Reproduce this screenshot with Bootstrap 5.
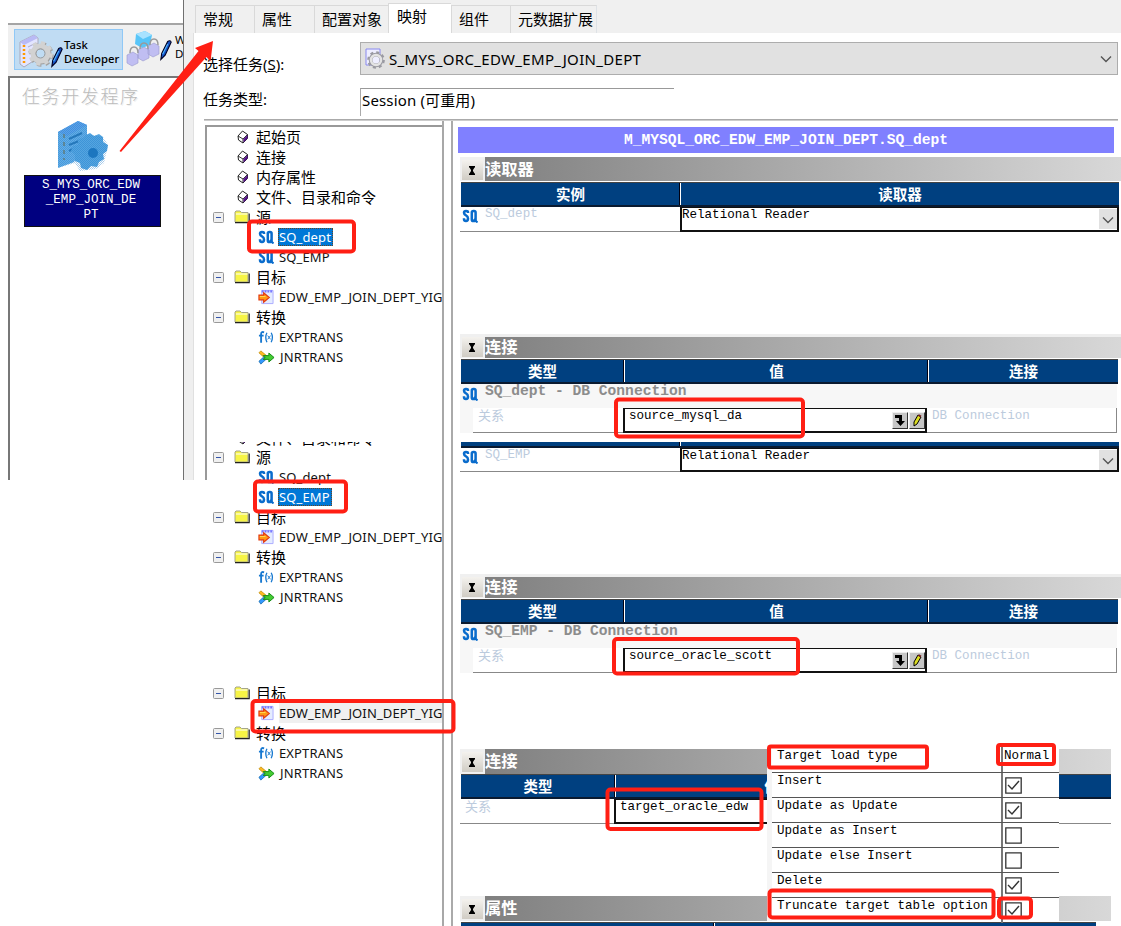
<!DOCTYPE html>
<html lang="zh-CN">
<head>
<meta charset="utf-8">
<title>Task Developer</title>
<link href="https://cdn.jsdelivr.net/npm/bootstrap@5.3.0/dist/css/bootstrap.min.css" rel="stylesheet">
<script src="https://cdn.jsdelivr.net/npm/bootstrap@5.3.0/dist/js/bootstrap.bundle.min.js"></script>
<style>
body{width:1121px;height:926px;background:#fff;color:#000;font:15px/20px "Noto Sans","Noto Sans CJK SC",sans-serif}
svg{display:block;flex:none}
.mono{font-family:"Liberation Mono","Noto Sans CJK SC",monospace;font-size:12.55px;line-height:15px;white-space:pre}
.dev{width:183px;height:480px;padding:23px 0 0 8px}
.toolbar{height:53px;background:#f0f0f0;border-top:2px solid #a5a5a5}
.tool{height:41px;width:109px;margin:4px 0 0 6px;border:1px solid #90c8f6;background:#c0dcf3;font-size:11.3px;line-height:14px;font-weight:500;padding:2px 0 0 2px}
.tool2{margin:2px 0 0 3px;font-size:11.5px;line-height:14px}
.canvas{height:404px;border-left:2px solid #777;border-top:2px solid #777}
.emboss{font-size:18px;line-height:24px;letter-spacing:1.6px;color:#bbb;text-shadow:-1px 0 #fff,1px 1px #eee;margin:6px 0 0 12px;font-weight:300}
.node{width:137px;height:52px;margin:1px 0 0 14px;background:#000080;border:1px solid #111;color:#fff;text-align:center}
.node .mono{padding-top:2px;margin-left:-3px}
.win{height:926px;width:938px}
.strip{height:33px;background:#f0f0f0;padding-left:11px;border-left:1px solid #707070}
.tabx{height:28px;border:1px solid #d9d9d9;border-bottom:0;border-right:0;background:#f0f0f0;padding:3px 0 0 7px}
.tabx.on{height:30px;background:#fff;padding:2px 0 0 8px}
.edge{width:11px;height:447px;background:#efefef;border-left:1px solid #707070;border-right:1px solid #e0e0e0}
.combo{width:758px;height:33px;background:#e1e1e1;border:1px solid #adadad;padding:0 5px 0 4px;font-size:15px;letter-spacing:.32px}
.stat{width:314px;height:28px;border-left:1px solid #aaa;border-top:1px solid #999;padding:1px 0 0 1px;letter-spacing:.15px}
.rule{height:2px;width:914px;margin:3px 0 0 10px;background:linear-gradient(#999,#ddd)}
.tree{width:239px;height:805px;border-right:2px solid #a8a8a8;overflow:hidden;padding-top:4px}
.t1{height:317px;border-left:2px solid #999;border-top:2px solid #999}
.second{height:166px;overflow:hidden;background:linear-gradient(#999,#999) 0 0/2px 38px no-repeat;padding-left:2px}
.third{margin-top:75px;padding-left:2px}
.r{height:20px;white-space:nowrap;padding-left:30px}
.r.f{padding-left:6px}
.r.c{padding-left:51px;font-size:13px;color:#111}
.r.c .tx{letter-spacing:.13px;line-height:20px}
.r.c svg{margin-right:5px}
.r .bk{margin-right:7px}.r .mi{margin-right:10px}.r .fo{margin-right:6px}
.tx.sel{background:#0078d7;color:#fff;outline:1px dotted #642;outline-offset:-1px;height:18px;line-height:18px!important;margin-left:-1px;padding:0 2px 0 1px}
.detail{width:670px;margin-left:7px;height:805px;border-left:2px solid #aaa;padding-left:5px}
.banner{width:656px;height:26px;margin:6px 0 4px;padding-top:6px;background:#8080ff;color:#fff;text-align:center;font-weight:700}
.banner .mono,.grp .mono{font-size:14.6px;font-weight:700}
.sec{margin-left:2px}
.bar{height:24px;background:#f0f0f0}
.bar b{font-size:16.3px;color:#fff;line-height:24px;background:linear-gradient(90deg,#808080,#d8d8d8);flex:1;height:100%}
.bar b.lip{border-top:3px solid #eee;line-height:20px}
.bar.tall{height:25px}
.bar i{width:21px;height:20px;margin:3px 2px 0;background:linear-gradient(#f4f2ee,#d0ccc4);align-self:flex-start}
.bar i svg{margin:6px 0 0 6px}
.hd{height:25px;border-top:1px solid #444;border-bottom:2px solid #0a1a30;background:#004080;color:#fff;font-weight:700;font-size:14.5px;line-height:22px;text-align:center;margin-left:1px}
.hd div+div{border-left:1px solid #fff;box-shadow:-1px 0 #001}
.ln{height:25px;border-bottom:1px solid #888}
.ln svg{margin:2px 0 0 2px}
.pale{color:#bccbdd}
.val{border:2px solid #111;border-top:1px solid #111;height:25px;background:#fff}
.grp{height:24px;background:#f7f7f7;color:#8c8c8c}
.grp svg{margin:3px 0 0 2px}
.grp .mono{line-height:14px}
.kin{width:150px;font-size:13px;line-height:15px;padding-left:5px}
.dd{width:18px;height:20px;background:#e1e1e1;margin-top:1px}
.dd svg{margin:7px 3px}
.ib{width:16px;height:17px;background:#c6c6c6;border:1px solid #eee;border-right-color:#333;border-bottom-color:#333;margin:3px 1px 0 0}
.w219{width:219px}.w163{width:163px}.w304{width:304px}.w190{width:190px}
.opts{left:767px;top:745px;width:292px;height:176px;background:#fff;border-left:5px solid #f5f5f5}
.opts>div{height:25px;border-bottom:1px solid #555;padding-left:5px}
.opts>div:first-child{height:27.5px}
.opts>div:first-child>.mono{padding-top:4px}
.opts>div>.mono{width:224px;padding-top:1px}
.opts .v{border-left:2px solid #777;height:100%;flex:1;padding:3px 0 0 1px}
.opts .v svg{margin:1px 0 0 1px}
.over{left:0;top:0;z-index:5}
</style>
</head>
<body class="position-relative overflow-hidden d-flex align-items-start">
<svg width="0" height="0" class="position-absolute">
<defs>
<pattern id="dots" width="2" height="2" patternUnits="userSpaceOnUse"><path fill="#1876c8" opacity=".75" d="M0 0h1v1H0zM1 1h1v1H1z"/></pattern>
<symbol id="book" viewBox="0 0 12 14"><path d="M1 6 5.500 1 10.500 4.500V8.500L6 13 1.500 10z" fill="#fff" stroke="#222" stroke-width="1"/><path d="m1 6 5 3 4.500-4.500M6 9v4" fill="none" stroke="#222" stroke-width=".9"/><path d="m6.500 9 4-4v3.500l-4 4z" fill="#518"/></symbol>
<symbol id="minus" viewBox="0 0 11 11"><rect x=".5" y=".5" width="10" height="10" rx="1" fill="#f0f0f0" stroke="#999"/><path d="M3 5.500h5" stroke="#35a"/></symbol>
<symbol id="folder" viewBox="0 0 16 14"><path d="M1 12V2l1-1h4l1.500 1.500H14V12z" fill="#f7f445" stroke="#a5a58a"/><path d="M1 12.700h14.200V3.500" fill="none" stroke="#222" stroke-width="1.200"/><path d="M2 4h11.500" stroke="#fff"/></symbol>
<symbol id="sq" viewBox="0 0 16 14"><g fill="none" stroke="#0a6ccc" stroke-width="2.500"><path d="M6 4V3.200Q6 2 4 2T2 3.800Q2 5.500 4 6.400T6 9.500Q6 12 4 12T2 10V9.300"/><rect x="9.800" y="2" width="3.800" height="10" rx="1.600"/><path d="m11.800 10 3.700 3.500" stroke-width="2"/></g></symbol>
<symbol id="tgt" viewBox="0 0 17 16"><path d="M4 1h12v14H4z" fill="#e4ecff" stroke="#aaf"/><path d="M4 2h12" stroke="#77f" stroke-width="2.500" stroke-dasharray="2 1"/><path d="M1 6h5V3.500l6 5-6 5V11H1z" fill="#ff9a14" stroke="#e33a10" stroke-width="1.200"/><path d="M2 7.500h6" stroke="#fd5"/></symbol>
<symbol id="fx" viewBox="0 0 17 14"><g fill="none" stroke="#1778d0" stroke-width="2"><path d="M6.500 2Q3.300 1 3.300 4v9M1 5.500h5"/><path d="M9.500 2.500Q7 7 9.500 12.500M14 2.500q2.600 4.500 0 10" stroke-width="1.400"/><path d="m10.300 5.500 3 4m0-4-3 4" stroke-width="1"/></g></symbol>
<symbol id="jn" viewBox="0 0 18 15"><path d="m1 2.500 2-2 6 5-2.500 2z" fill="#fb2" stroke="#b80" stroke-width=".8"/><path d="m1 11.500 5-4.500 3 2-6 5.500z" fill="#39f" stroke="#16a" stroke-width=".8"/><path d="M5.500 5.500h6V2.800l5.500 4.700-5.500 4.700V9.500h-6l2-2z" fill="#4c3" stroke="#181"/></symbol>
<symbol id="hour" viewBox="0 0 8 9"><path d="M1 0h6v1.500H6.500L5 4v1l1.500 2.500H7V9H1V7.500h.5L3 5V4L1.500 1.500H1z" fill="#000"/></symbol>
<symbol id="chev" viewBox="0 0 12 8"><path d="m1 1.500 5 5 5-5" fill="none" stroke="#555" stroke-width="1.400"/></symbol>
<symbol id="gear" viewBox="0 0 24 24"><circle cx="12" cy="12" r="7.200" fill="none" stroke="currentColor" stroke-width="5"/><circle cx="12" cy="12" r="10.300" fill="none" stroke="currentColor" stroke-width="3" stroke-dasharray="4.100 3.990"/></symbol>
<symbol id="pen" viewBox="0 0 14 24"><path d="M9 2q3-2 4 1L6 18l-5 5 1-7z" fill="#1553c8" stroke="#002" stroke-width="1.300"/><path d="m9 5-6 12" stroke="#5bf" stroke-width="1.200"/></symbol>
<symbol id="down" viewBox="0 0 14 14"><path d="M2 2h7v6h3l-4.500 5L3 8h3V5H2z" fill="#000"/></symbol>
<symbol id="pencil" viewBox="0 0 14 14"><path d="m4 9 4-7 3 2-4 7-3 2z" fill="#dd2" stroke="#000"/><path d="m8.500 2 2.500 1.500" stroke="#722" stroke-width="2"/></symbol>
<symbol id="on" viewBox="0 0 17 17"><path d="M.8.800h15.400v15.400H.800z" fill="#fff" stroke="#333" stroke-width="1.300"/><path d="m3 8 4 4 7-8" fill="none" stroke="#333" stroke-width="1.400"/></symbol>
<symbol id="off" viewBox="0 0 17 17"><path d="M.8.800h15.400v15.400H.800z" fill="#fff" stroke="#333" stroke-width="1.300"/></symbol>
</defs>
</svg>

<aside class="dev flex-shrink-0">
  <div class="toolbar d-flex overflow-hidden">
    <div class="tool d-flex flex-shrink-0">
      <svg width="47" height="38" viewBox="0 0 47 38"><path d="M3 10 17 3l4 3v20L7 35l-4-3z" fill="#e3e5ff" stroke="#aab"/><path d="m3 10 14-7 4 3L7 13z" fill="#b9baf5"/><path d="M7 13v18" stroke="#f90" stroke-width="2.500" stroke-dasharray="2 2"/><path d="m11 15 8-4m-8 9 8-4" stroke="#aac"/><g color="#a2a2a2"><use href="#gear" x="12" y="10" width="25" height="25"/></g><g color="#d2d2d2"><use href="#gear" x="11" y="9" width="25" height="25"/></g><circle cx="23.500" cy="21.500" r="4.500" fill="#c0dcf3" stroke="#999"/><use href="#pen" x="34" y="14" width="12" height="22"/></svg>
      <div style="margin-top:6px">Task<br>Developer</div>
    </div>
    <div class="tool2 d-flex flex-shrink-0">
      <svg width="47" height="41" viewBox="0 0 47 41"><path d="m10 7 9-3 7 4-2 10-8 3-7-4z" fill="#58c5f8"/><path d="m10 7 9-3 7 4-9 4z" fill="#a8e2ff"/><g fill="#c0beF2" stroke="#99c" stroke-width=".600"><path d="m1 28 6-3 5 3v8l-6 3-5-3zM12 23l6-3 5 3v8l-6 3-5-3zM22 19l6-3 5 3v8l-6 3-5-3z"/></g><g fill="none" stroke="#999" stroke-width="1.500"><path d="M4 26q0-6 4-6t4 6M14 22q0-6 4-6t4 6M24 18q0-6 4-6t4 6"/></g><use href="#pen" x="34" y="12" width="12" height="22"/></svg>
      <div style="margin:6px 0 0 2px">Workflow<br>Designer</div>
    </div>
  </div>
  <div class="canvas">
    <div class="emboss">任务开发程序</div>
    <svg width="54" height="54" viewBox="0 0 54 54" style="margin:12px 0 0 46px"><path d="M2 12 22 1l9 4v12L18 42 2 48z" fill="#64aee6"/><path d="m2 12 20-11 9 4-20 11z" fill="#5ba0e8"/><path d="m13 19 13-6M13 25l10-4M13 31l6-3" stroke="#2878b8" stroke-width="2"/><path d="M8 14v26" stroke="#6b8a8c" stroke-width="2" stroke-dasharray="4 4"/><path d="m30 15 4-2 4 3 5-2 4 3v5l5 3-1 6-4 3 1 5-5 3-2 5-6-1-4 4-6-2-1-5-5-2v-6l-4-4 2-5 5-1v-6l5-1z" fill="#55a5e0"/><circle cx="37" cy="33" r="5" fill="#1d76bd"/><path d="M2 12 22 1l9 4v9l16 3 5 8-4 18-8 6-16 2-5-8-17 5z" fill="url(#dots)" opacity=".5"/></svg>
    <div class="node"><div class="mono">S_MYS_ORC_EDW
_EMP_JOIN_DE
PT</div></div>
  </div>
</aside>

<main class="win flex-shrink-0">
  <div class="strip d-flex align-items-end">
    <div class="tabx" style="width:59px">常规</div><div class="tabx" style="width:60px">属性</div><div class="tabx" style="width:74px">配置对象</div><div class="tabx on" style="width:63px">映射</div><div class="tabx" style="width:59px">组件</div><div class="tabx border-end" style="width:87px">元数据扩展</div>
  </div>
  <div class="d-flex">
    <div class="edge flex-shrink-0"></div>
    <div class="flex-grow-1">
      <div class="d-flex" style="height:55px;padding:9px 0 0 9px">
        <div style="width:157px;padding-top:12px">选择任务(<u>S</u>):</div>
        <div class="combo d-flex align-items-center"><svg width="20" height="22" viewBox="0 0 20 22" style="margin-right:4px"><path d="M1 1h14v16H1z" fill="#eef" stroke="#88e"/><g color="#9a9aa2"><use href="#gear" x="2" y="3" width="18" height="18"/></g><circle cx="11" cy="12" r="5" fill="none" stroke="#e4e4e4" stroke-width="2.500"/></svg><span class="flex-grow-1">S_MYS_ORC_EDW_EMP_JOIN_DEPT</span><svg width="12" height="8"><use href="#chev"/></svg></div>
      </div>
      <div class="d-flex" style="height:28px;padding-left:9px"><div style="width:157px;padding-top:1px">任务类型:</div><div class="stat">Session (可重用)</div></div>
      <div class="rule"></div>
      <div class="d-flex" style="padding-left:11px">
        <div class="tree flex-shrink-0">
          <div class="t1">
            <div class="r d-flex align-items-center"><svg class="bk" width="12" height="14"><use href="#book"/></svg><span>起始页</span></div>
            <div class="r d-flex align-items-center"><svg class="bk" width="12" height="14"><use href="#book"/></svg><span>连接</span></div>
            <div class="r d-flex align-items-center"><svg class="bk" width="12" height="14"><use href="#book"/></svg><span>内存属性</span></div>
            <div class="r d-flex align-items-center"><svg class="bk" width="12" height="14"><use href="#book"/></svg><span>文件、目录和命令</span></div>
            <div class="r f d-flex align-items-center"><svg class="mi" width="11" height="11"><use href="#minus"/></svg><svg class="fo" width="16" height="14"><use href="#folder"/></svg><span>源</span></div>
            <div class="r c d-flex align-items-center"><svg width="16" height="14"><use href="#sq"/></svg><span class="tx sel">SQ_dept</span></div>
            <div class="r c d-flex align-items-center"><svg width="16" height="14"><use href="#sq"/></svg><span class="tx">SQ_EMP</span></div>
            <div class="r f d-flex align-items-center"><svg class="mi" width="11" height="11"><use href="#minus"/></svg><svg class="fo" width="16" height="14"><use href="#folder"/></svg><span>目标</span></div>
            <div class="r c d-flex align-items-center"><svg width="16" height="16"><use href="#tgt"/></svg><span class="tx">EDW_EMP_JOIN_DEPT_YIG</span></div>
            <div class="r f d-flex align-items-center"><svg class="mi" width="11" height="11"><use href="#minus"/></svg><svg class="fo" width="16" height="14"><use href="#folder"/></svg><span>转换</span></div>
            <div class="r c d-flex align-items-center"><svg width="16" height="14"><use href="#fx"/></svg><span class="tx">EXPTRANS</span></div>
            <div class="r c d-flex align-items-center"><svg width="17" height="15"><use href="#jn"/></svg><span class="tx">JNRTRANS</span></div>
          </div>
          <div class="second">
            <div style="height:5px" class="overflow-hidden"><div class="r d-flex align-items-center" style="margin-top:-14px"><svg class="bk" width="12" height="14"><use href="#book"/></svg><span>文件、目录和命令</span></div></div>
            <div class="r f d-flex align-items-center"><svg class="mi" width="11" height="11"><use href="#minus"/></svg><svg class="fo" width="16" height="14"><use href="#folder"/></svg><span>源</span></div>
            <div class="r c d-flex align-items-center"><svg width="16" height="14"><use href="#sq"/></svg><span class="tx">SQ_dept</span></div>
            <div class="r c d-flex align-items-center"><svg width="16" height="14"><use href="#sq"/></svg><span class="tx sel">SQ_EMP</span></div>
            <div class="r f d-flex align-items-center"><svg class="mi" width="11" height="11"><use href="#minus"/></svg><svg class="fo" width="16" height="14"><use href="#folder"/></svg><span>目标</span></div>
            <div class="r c d-flex align-items-center"><svg width="16" height="16"><use href="#tgt"/></svg><span class="tx">EDW_EMP_JOIN_DEPT_YIG</span></div>
            <div class="r f d-flex align-items-center"><svg class="mi" width="11" height="11"><use href="#minus"/></svg><svg class="fo" width="16" height="14"><use href="#folder"/></svg><span>转换</span></div>
            <div class="r c d-flex align-items-center"><svg width="16" height="14"><use href="#fx"/></svg><span class="tx">EXPTRANS</span></div>
            <div class="r c d-flex align-items-center"><svg width="17" height="15"><use href="#jn"/></svg><span class="tx">JNRTRANS</span></div>
          </div>
          <div class="third">
            <div class="r f d-flex align-items-center"><svg class="mi" width="11" height="11"><use href="#minus"/></svg><svg class="fo" width="16" height="14"><use href="#folder"/></svg><span>目标</span></div>
            <div class="r c d-flex align-items-center"><svg width="16" height="16"><use href="#tgt"/></svg><span class="tx" style="background:#f0f0f0">EDW_EMP_JOIN_DEPT_YIG</span></div>
            <div class="r f d-flex align-items-center"><svg class="mi" width="11" height="11"><use href="#minus"/></svg><svg class="fo" width="16" height="14"><use href="#folder"/></svg><span>转换</span></div>
            <div class="r c d-flex align-items-center"><svg width="16" height="14"><use href="#fx"/></svg><span class="tx">EXPTRANS</span></div>
            <div class="r c d-flex align-items-center"><svg width="17" height="15"><use href="#jn"/></svg><span class="tx">JNRTRANS</span></div>
          </div>
        </div>

        <div class="detail flex-shrink-0">
          <div class="banner"><div class="mono">M_MYSQL_ORC_EDW_EMP_JOIN_DEPT.SQ_dept</div></div>
          <section class="sec" style="height:177px">
            <div class="bar d-flex"><i><svg width="8" height="9"><use href="#hour"/></svg></i><b>读取器</b></div>
            <div class="hd d-flex" style="margin-top:1px;width:658px"><div class="w219">实例</div><div class="flex-grow-1">读取器</div></div>
            <div class="d-flex" style="width:659px"><div class="ln d-flex" style="width:220px"><svg width="16" height="14"><use href="#sq"/></svg><span class="mono pale" style="margin-left:7px">SQ_dept</span></div><div class="val d-flex flex-grow-1"><span class="mono flex-grow-1">Relational Reader</span><span class="dd"><svg width="12" height="8"><use href="#chev"/></svg></span></div></div>
          </section>
          <section class="sec" style="height:108px">
            <div class="bar d-flex"><i><svg width="8" height="9"><use href="#hour"/></svg></i><b class="lip">连接</b></div>
            <div class="hd d-flex" style="margin-top:1px;width:657px"><div class="w163">类型</div><div class="w304">值</div><div class="w190">连接</div></div>
            <div class="grp d-flex" style="width:657px"><svg width="16" height="14"><use href="#sq"/></svg><span class="mono" style="margin-left:7px">SQ_dept - DB Connection</span></div>
            <div class="d-flex" style="width:657px"><div class="grp" style="width:13px;height:25px"></div><div class="ln pale kin">关系</div><div class="val d-flex" style="width:304px"><span class="mono flex-grow-1" style="padding-left:4px">source_mysql_da</span><span class="ib"><svg width="14" height="14"><use href="#down"/></svg></span><span class="ib me-0"><svg width="14" height="14"><use href="#pencil"/></svg></span></div><div class="ln mono pale flex-grow-1" style="padding:1px 0 0 5px;border-right:1px solid #888">DB Connection</div></div>
          </section>
          <section class="sec" style="height:132px">
            <div class="hd d-flex" style="height:6px;border-top:0;width:658px"><div class="w219"></div><div class="flex-grow-1"></div></div>
            <div class="d-flex" style="width:659px"><div class="ln d-flex" style="width:220px;height:24px"><svg width="16" height="14"><use href="#sq"/></svg><span class="mono pale" style="margin-left:7px">SQ_EMP</span></div><div class="val d-flex flex-grow-1" style="height:24px"><span class="mono flex-grow-1">Relational Reader</span><span class="dd"><svg width="12" height="8"><use href="#chev"/></svg></span></div></div>
          </section>
          <section class="sec" style="height:175px">
            <div class="bar d-flex"><i><svg width="8" height="9"><use href="#hour"/></svg></i><b class="lip">连接</b></div>
            <div class="hd d-flex" style="margin-top:1px;width:657px"><div class="w163">类型</div><div class="w304">值</div><div class="w190">连接</div></div>
            <div class="grp d-flex" style="width:657px"><svg width="16" height="14"><use href="#sq"/></svg><span class="mono" style="margin-left:7px">SQ_EMP - DB Connection</span></div>
            <div class="d-flex" style="width:657px"><div class="grp" style="width:13px;height:25px"></div><div class="ln pale kin">关系</div><div class="val d-flex" style="width:304px"><span class="mono flex-grow-1" style="padding-left:4px">source_oracle_scott</span><span class="ib"><svg width="14" height="14"><use href="#down"/></svg></span><span class="ib me-0"><svg width="14" height="14"><use href="#pencil"/></svg></span></div><div class="ln mono pale flex-grow-1" style="padding:1px 0 0 5px;border-right:1px solid #888">DB Connection</div></div>
          </section>
          <section class="sec" style="height:147px;width:651px">
            <div class="bar tall d-flex"><i><svg width="8" height="9"><use href="#hour"/></svg></i><b>连接</b></div>
            <div class="hd d-flex"><div style="width:154px">类型</div><div style="width:312px">值</div><div class="flex-grow-1"></div></div>
            <div class="d-flex"><div class="ln pale kin" style="width:154px">关系</div><div class="val mono" style="width:312px;padding-left:4px">target_oracle_edw</div><div class="ln flex-grow-1"></div></div>
          </section>
          <section class="sec" style="width:651px">
            <div class="bar tall d-flex"><i><svg width="8" height="9"><use href="#hour"/></svg></i><b>属性</b></div>
            <div class="hd d-flex" style="height:5px;border-bottom:0;width:635px;margin-top:1px"><div style="width:253px"></div><div class="flex-grow-1"></div></div>
          </section>
        </div>
      </div>
    </div>
  </div>
</main>

<div class="opts position-absolute">
  <div class="d-flex"><span class="mono">Target load type</span><span class="v mono">Normal</span></div>
  <div class="d-flex"><span class="mono">Insert</span><span class="v"><svg width="17" height="17"><use href="#on"/></svg></span></div>
  <div class="d-flex"><span class="mono">Update as Update</span><span class="v"><svg width="17" height="17"><use href="#on"/></svg></span></div>
  <div class="d-flex"><span class="mono">Update as Insert</span><span class="v"><svg width="17" height="17"><use href="#off"/></svg></span></div>
  <div class="d-flex"><span class="mono">Update else Insert</span><span class="v"><svg width="17" height="17"><use href="#off"/></svg></span></div>
  <div class="d-flex"><span class="mono">Delete</span><span class="v"><svg width="17" height="17"><use href="#on"/></svg></span></div>
  <div class="d-flex border-bottom-0"><span class="mono">Truncate target table option</span><span class="v"><svg width="17" height="17"><use href="#on"/></svg></span></div>
</div>

<svg class="over position-absolute" width="1121" height="926" fill="none" stroke="#ff1f14" stroke-width="4">
  <path d="M119.500 151 198.500 51 195 48l18-7-2.500 20.500-4-4.500L121 152z" fill="#ff1f14" stroke="none"/>
  <rect x="249" y="221.500" width="105" height="30" rx="3"/>
  <rect x="255" y="481.500" width="91" height="30" rx="3"/>
  <rect x="252.500" y="701" width="201" height="30.500" rx="3"/>
  <rect x="616" y="399.500" width="187" height="37" rx="3"/>
  <rect x="614" y="639" width="184" height="34.500" rx="3"/>
  <rect x="607.500" y="789.500" width="154" height="39.500" rx="3"/>
  <rect x="769" y="746.500" width="158" height="21" rx="2"/>
  <rect x="998" y="745" width="56" height="19" rx="2"/>
  <rect x="769.500" y="890.500" width="224" height="27" rx="3"/>
  <rect x="999" y="898.500" width="32" height="19" rx="3"/>
</svg>
</body>
</html>
